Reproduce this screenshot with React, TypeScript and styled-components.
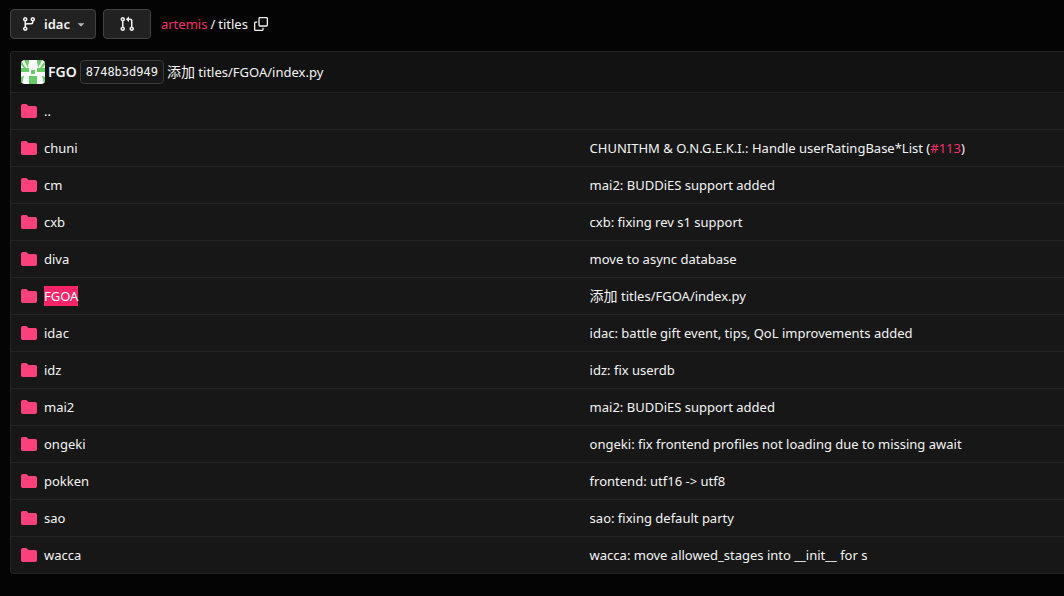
import React from "react";
import styled, { createGlobalStyle } from "styled-components";

const GlobalStyle = createGlobalStyle`
  *, *::before, *::after { box-sizing: border-box; }
  body {
    margin: 0;
    background: #040404;
    color: #f4f4f4;
    font-family: "Segoe UI", "Noto Sans", "Noto Sans CJK SC", sans-serif;
    font-size: 13px;
    line-height: 20px;
    overflow-x: hidden;
  }
`;

const Page = styled.main`
  padding: 9px 0 22px 10px;
`;

const Toolbar = styled.div`
  display: flex;
  align-items: center;
  gap: 7px;
  margin-bottom: 12px;
`;

const Button = styled.button<{ $wide?: boolean }>`
  display: inline-flex;
  align-items: center;
  justify-content: center;
  height: 30px;
  padding: 0 ${(p) => (p.$wide ? "15px" : "7px 0 10px")};
  border: 1px solid #424242;
  border-radius: 4px;
  background: #212121;
  color: #f4f4f4;
  font: inherit;
  font-weight: 600;
  cursor: pointer;
`;

const BranchName = styled.span`
  margin: 0 4px 0 7px;
`;

const Breadcrumb = styled.nav`
  display: flex;
  align-items: center;
  gap: 3px;
  margin-left: 3px;
`;

const AccentLink = styled.a`
  color: #fa2d6b;
  text-decoration: none;
`;

const PlainLink = styled.a`
  color: inherit;
  text-decoration: none;
`;

const CopyButton = styled.button`
  display: inline-flex;
  margin-left: 3px;
  padding: 0;
  border: 0;
  background: none;
  color: #f4f4f4;
  cursor: pointer;
`;

const Panel = styled.section`
  border: 1px solid #242424;
  border-right: 0;
  border-radius: 4px 0 0 4px;
  background: #171717;
  overflow: hidden;
`;

const CommitBar = styled.header`
  display: flex;
  align-items: center;
  gap: 3px;
  height: 40px;
  padding: 0 10px;
  background: #121212;
`;

const Author = styled(PlainLink)`
  display: inline-flex;
  align-items: center;
  gap: 3px;
  font-size: 14px;
  font-weight: 600;
`;

const Sha = styled(PlainLink)`
  height: 24px;
  padding: 0 5px;
  border: 1px solid #3a3a3a;
  border-radius: 4px;
  background: #171717;
  font-family: "DejaVu Sans Mono", monospace;
  font-size: 12px;
  line-height: 22px;
`;

const Files = styled.table`
  width: 100%;
  table-layout: fixed;
  border-collapse: separate;
  border-spacing: 0;
`;

const Cell = styled.td<{ $name?: boolean }>`
  width: ${(p) => (p.$name ? "54%" : "auto")};
  height: 37px;
  padding: 0 10px;
  border-top: 1px solid #242424;
  white-space: nowrap;
`;

const Entry = styled(PlainLink)`
  display: flex;
  align-items: center;
  gap: 7px;
`;

const Selected = styled.mark`
  background: #fc2468;
  color: #ffffff;
`;

const Han = styled.span`
  font-size: 14px;
`;

const Svg = styled.svg`
  display: block;
  flex: none;
  fill: currentColor;
`;

const FolderSvg = styled(Svg)`
  color: #fb417b;
`;

const CaretSvg = styled(Svg)`
  color: #b8b8b8;
`;

const AvatarSvg = styled(Svg)`
  border-radius: 4px;
`;

const paths = {
  branch:
    "M9.5 3.25a2.25 2.25 0 1 1 3 2.122V6A2.5 2.5 0 0 1 10 8.5H6a1 1 0 0 0-1 1v1.128a2.251 2.251 0 1 1-1.5 0V5.372a2.25 2.25 0 1 1 1.5 0v1.836A2.493 2.493 0 0 1 6 7h4a1 1 0 0 0 1-1v-.628A2.25 2.25 0 0 1 9.5 3.25Zm-6 0a.75.75 0 1 0 1.5 0 .75.75 0 0 0-1.5 0Zm8.25-.75a.75.75 0 1 0 0 1.5.75.75 0 0 0 0-1.5ZM4.25 12a.75.75 0 1 0 0 1.5.75.75 0 0 0 0-1.5Z",
  pull:
    "M1.5 3.25a2.25 2.25 0 1 1 3 2.122v5.256a2.251 2.251 0 1 1-1.5 0V5.372A2.25 2.25 0 0 1 1.5 3.25Zm5.677-.177L9.573.677A.25.25 0 0 1 10 .854V2.5h1A2.5 2.5 0 0 1 13.5 5v5.628a2.251 2.251 0 1 1-1.5 0V5a1 1 0 0 0-1-1h-1v1.646a.25.25 0 0 1-.427.177L7.177 3.427a.25.25 0 0 1 0-.354ZM3.75 2.5a.75.75 0 1 0 0 1.5.75.75 0 0 0 0-1.5Zm0 9.5a.75.75 0 1 0 0 1.5.75.75 0 0 0 0-1.5Zm8.25.75a.75.75 0 1 0 1.5 0 .75.75 0 0 0-1.5 0Z",
  copy:
    "M0 6.75C0 5.784.784 5 1.75 5h1.5a.75.75 0 0 1 0 1.5h-1.5a.25.25 0 0 0-.25.25v7.5c0 .138.112.25.25.25h7.5a.25.25 0 0 0 .25-.25v-1.5a.75.75 0 0 1 1.5 0v1.5A1.75 1.75 0 0 1 9.25 16h-7.5A1.75 1.75 0 0 1 0 14.25ZM5 1.75C5 .784 5.784 0 6.75 0h7.5C15.216 0 16 .784 16 1.75v7.5A1.75 1.75 0 0 1 14.25 11h-7.5A1.75 1.75 0 0 1 5 9.25Zm1.75-.25a.25.25 0 0 0-.25.25v7.5c0 .138.112.25.25.25h7.5a.25.25 0 0 0 .25-.25v-7.5a.25.25 0 0 0-.25-.25Z",
  folder:
    "M1.75 1A1.75 1.75 0 0 0 0 2.75v10.5C0 14.216.784 15 1.75 15h12.5A1.75 1.75 0 0 0 16 13.25v-8.5A1.75 1.75 0 0 0 14.25 3H7.5a.25.25 0 0 1-.2-.1l-.9-1.2C6.07 1.26 5.55 1 5 1H1.75Z",
  caret:
    "m4.427 7.427 3.396 3.396a.25.25 0 0 0 .354 0l3.396-3.396A.25.25 0 0 0 11.396 7H4.604a.25.25 0 0 0-.177.427Z",
};

const bases = { branch: Svg, pull: Svg, copy: Svg, folder: FolderSvg, caret: CaretSvg };

function Icon({ name, size = 16 }: { name: keyof typeof paths; size?: number }) {
  const Base = bases[name];
  return (
    <Base width={size} height={size} viewBox="0 0 16 16" aria-hidden="true">
      <path d={paths[name]} />
    </Base>
  );
}

function Avatar() {
  return (
    <AvatarSvg width="24" height="24" viewBox="0 0 24 24" aria-hidden="true">
      <rect width="24" height="24" fill="#fff" />
      <g fill="#66cc66">
        <path d="M0 8h8v4H0zM16 8h8v4h-8zM10 10h4v4h-4zM8 16h8v8H8z" />
        <path d="M3 0h5v1L7 8zM21 0h-5v1l1 7zM0 1l5 7H3L0 5zM24 1l-5 7h2l3-3z" />
        <path d="M0 17l2-1h1l-2 8H0zM24 17l-2-1h-1l2 8h1z" />
      </g>
    </AvatarSvg>
  );
}

const addIndex = (
  <PlainLink href="#">
    <Han>添加</Han> titles/FGOA/index.py
  </PlainLink>
);

const files: { name: string; message?: React.ReactNode; selected?: boolean }[] = [
  { name: ".." },
  {
    name: "chuni",
    message: (
      <>
        <PlainLink href="#">CHUNITHM &amp; O.N.G.E.K.I.: Handle userRatingBase*List (</PlainLink>
        <AccentLink href="#">#113</AccentLink>)
      </>
    ),
  },
  { name: "cm", message: "mai2: BUDDiES support added" },
  { name: "cxb", message: "cxb: fixing rev s1 support" },
  { name: "diva", message: "move to async database" },
  { name: "FGOA", message: addIndex, selected: true },
  { name: "idac", message: "idac: battle gift event, tips, QoL improvements added" },
  { name: "idz", message: "idz: fix userdb" },
  { name: "mai2", message: "mai2: BUDDiES support added" },
  { name: "ongeki", message: "ongeki: fix frontend profiles not loading due to missing await" },
  { name: "pokken", message: "frontend: utf16 -> utf8" },
  { name: "sao", message: "sao: fixing default party" },
  { name: "wacca", message: "wacca: move allowed_stages into __init__ for s" },
];

export default function App() {
  return (
    <>
      <GlobalStyle />
      <Page>
        <Toolbar>
          <Button type="button">
            <Icon name="branch" />
            <BranchName>idac</BranchName>
            <Icon name="caret" size={14} />
          </Button>
          <Button type="button" $wide aria-label="New pull request">
            <Icon name="pull" />
          </Button>
          <Breadcrumb>
            <AccentLink href="#">artemis</AccentLink>
            <span>/</span>
            <span>titles</span>
            <CopyButton type="button" aria-label="Copy path">
              <Icon name="copy" size={14} />
            </CopyButton>
          </Breadcrumb>
        </Toolbar>
        <Panel>
          <CommitBar>
            <Author href="#">
              <Avatar />
              <span>FGO</span>
            </Author>
            <Sha href="#">8748b3d949</Sha>
            {addIndex}
          </CommitBar>
          <Files>
            <tbody>
              {files.map((file) => (
                <tr key={file.name}>
                  <Cell $name>
                    <Entry href="#">
                      <Icon name="folder" />
                      {file.selected ? <Selected>{file.name}</Selected> : <span>{file.name}</span>}
                    </Entry>
                  </Cell>
                  <Cell>
                    {typeof file.message === "string" ? (
                      <PlainLink href="#">{file.message}</PlainLink>
                    ) : (
                      file.message
                    )}
                  </Cell>
                </tr>
              ))}
            </tbody>
          </Files>
        </Panel>
      </Page>
    </>
  );
}
